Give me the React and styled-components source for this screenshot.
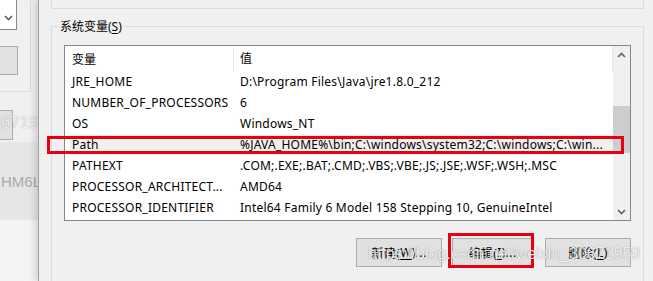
import styled, { createGlobalStyle } from 'styled-components'

const GlobalStyle = createGlobalStyle`
  html, body {
    margin: 0;
    padding: 0;
    background: #f0f0f0;
    overflow: hidden;
  }
  body {
    font-family: "Noto Sans", "Noto Sans CJK SC", sans-serif;
    font-size: 12px;
    color: #000;
  }
  u {
    text-underline-offset: 2px;
  }
`

const Page = styled.div`
  position: relative;
  width: 653px;
  height: 281px;
  display: flex;
  overflow: hidden;
`

/* window behind the dialog, only its right edge shows */
const BackWindow = styled.div`
  width: 38px;
  flex-shrink: 0;
  display: flex;
  flex-direction: column;
  background: #f0f0f0;
`
const BackGroup = styled.div`
  width: 30px;
  height: 91px;
  border-right: 1px solid #dcdcdc;
  border-bottom: 1px solid #dcdcdc;
  display: flex;
  flex-direction: column;
`
const Combo = styled.div`
  width: 17px;
  height: 30px;
  background: #fff;
  border-right: 1px solid #8a8a8a;
  border-bottom: 1px solid #8a8a8a;
  display: flex;
  align-items: flex-end;
  justify-content: center;
  padding-bottom: 8px;
  box-sizing: border-box;
`
const BackButton = styled.div`
  width: ${p => p.w}px;
  height: ${p => p.h}px;
  margin-top: ${p => p.top}px;
  background: #e1e1e1;
  border: 1px solid #adadad;
  border-left: none;
`
const GhostRow = styled.div`
  position: relative;
  margin-top: 18px;
`
const GhostMark = styled.span`
  position: absolute;
  left: 1px;
  top: 3px;
  font-family: "Liberation Sans", Arial, sans-serif;
  font-size: 17px;
  color: rgba(255, 255, 255, 0.9);
  text-shadow: 0 0 1px rgba(0, 0, 0, 0.45);
  white-space: nowrap;
`
const Band = styled.div`
  margin-top: 2px;
  height: 78px;
  background: #e6e6e6;
  display: flex;
  align-items: center;
  padding-left: 1px;
  font-family: "Liberation Sans", Arial, sans-serif;
  font-size: 15px;
  color: #a9a9a9;
  white-space: nowrap;
  overflow: hidden;
`
const BackRest = styled.div`
  flex: 1;
  background: #f4f4f4;
`

const Dialog = styled.div`
  position: relative;
  z-index: 1;
  flex: 1;
  display: flex;
  flex-direction: column;
  background: #f0f0f0;
  border-left: 1px solid #a0a0a0;
  box-shadow: -4px 0 6px rgba(0, 0, 0, 0.12);
  padding: 0 9px 0 12px;
`
const TopGroup = styled.div`
  height: 8px;
  border: 1px solid #dcdcdc;
  border-top: none;
`
const SysGroup = styled.div`
  flex: 1;
  margin-top: 17px;
  display: flex;
  flex-direction: column;
  border: 1px solid #dcdcdc;
  border-bottom: none;
  padding: 0 12px;
`
const Legend = styled.div`
  align-self: flex-start;
  margin: -9px 0 0 -6px;
  height: 18px;
  line-height: 18px;
  padding: 0 2px;
  background: #f0f0f0;
`
const List = styled.div`
  margin-top: 9px;
  height: 176px;
  box-sizing: border-box;
  border: 1px solid #828790;
  background: #fff;
  display: flex;
`
const Table = styled.div`
  flex: 1;
  display: flex;
  flex-direction: column;
`
const Header = styled.div`
  height: 25px;
  display: grid;
  grid-template-columns: 169px 1fr;
  border-right: 1px solid #e5e5e5;
  line-height: 25px;
`
const HeadCell = styled.div`
  padding-left: ${p => (p.first ? 7 : 6)}px;
  ${p => p.first && 'border-right: 1px solid #e5e5e5; margin: 1px 0 0;'}
`
const Row = styled.div`
  position: relative;
  margin-left: 5px;
  height: 21px;
  line-height: 21px;
  display: grid;
  grid-template-columns: 164px 1fr;
  background: ${p => (p.selected ? '#f0f0f0' : 'transparent')};

  ${p => p.marked && `
    &::after {
      content: '';
      position: absolute;
      left: -23px;
      right: -11px;
      top: 2px;
      bottom: 1px;
      border: 3px solid #e60012;
      pointer-events: none;
    }
  `}
`
const Cell = styled.div`
  padding-left: ${p => (p.first ? 2 : 6)}px;
  letter-spacing: 0.22px;
  white-space: nowrap;
  overflow: hidden;
`
const Scrollbar = styled.div`
  width: 17px;
  background: #f0f0f0;
  display: flex;
  flex-direction: column;
`
const ArrowBox = styled.div`
  height: 17px;
  display: flex;
  align-items: center;
  justify-content: center;
`
const Track = styled.div`
  flex: 1;
  padding-top: 43px;
`
const Thumb = styled.div`
  height: 47px;
  background: #cdcdcd;
`
const ButtonRow = styled.div`
  margin-top: 17px;
  display: flex;
  justify-content: flex-end;
`
const Button = styled.div`
  position: relative;
  width: ${p => p.w}px;
  height: 29px;
  box-sizing: border-box;
  margin-left: ${p => p.gap || 0}px;
  background: #e1e1e1;
  border: 1px solid #adadad;
  display: flex;
  align-items: center;
  justify-content: center;
  letter-spacing: 0.4px;

  ${p => p.marked && `
    &::after {
      content: '';
      position: absolute;
      left: -5px;
      right: -2px;
      top: -6px;
      bottom: -2px;
      border: 3px solid #e60012;
      pointer-events: none;
    }
  `}
`
const Watermark = styled.div`
  position: absolute;
  left: 368px;
  top: 245px;
  z-index: 3;
  font-family: "Liberation Sans", Arial, sans-serif;
  font-size: 16px;
  color: rgba(255, 255, 255, 0.9);
  text-shadow: 0 0 1px rgba(0, 0, 0, 0.5);
  white-space: nowrap;
`

const Chevron = ({ up }) => (
  <svg width="9" height="6" viewBox="0 0 9 6">
    <polyline
      points={up ? '1,5 4.5,1.5 8,5' : '1,1 4.5,4.5 8,1'}
      fill="none"
      stroke="#606060"
      strokeWidth="1.6"
    />
  </svg>
)

const vars = [
  ['JRE_HOME', 'D:\\Program Files\\Java\\jre1.8.0_212'],
  ['NUMBER_OF_PROCESSORS', '6'],
  ['OS', 'Windows_NT'],
  ['Path', '%JAVA_HOME%\\bin;C:\\windows\\system32;C:\\windows;C:\\win...', true],
  ['PATHEXT', '.COM;.EXE;.BAT;.CMD;.VBS;.VBE;.JS;.JSE;.WSF;.WSH;.MSC'],
  ['PROCESSOR_ARCHITECT...', 'AMD64'],
  ['PROCESSOR_IDENTIFIER', 'Intel64 Family 6 Model 158 Stepping 10, GenuineIntel'],
]

export default function App() {
  return (
    <Page>
      <GlobalStyle />
      <BackWindow>
        <BackGroup>
          <Combo><Chevron /></Combo>
          <BackButton w={17} h={27} top={16} />
        </BackGroup>
        <GhostRow>
          <BackButton w={12} h={28} top={0} />
          <GhostMark>67191</GhostMark>
        </GhostRow>
        <Band>HM6L</Band>
        <BackRest />
      </BackWindow>

      <Dialog>
        <TopGroup />
        <SysGroup>
          <Legend>系统变量(<u>S</u>)</Legend>
          <List>
            <Table>
              <Header>
                <HeadCell first>变量</HeadCell>
                <HeadCell>值</HeadCell>
              </Header>
              {vars.map(([name, value, hot]) => (
                <Row key={name} selected={hot} marked={hot}>
                  <Cell first>{name}</Cell>
                  <Cell>{value}</Cell>
                </Row>
              ))}
            </Table>
            <Scrollbar>
              <ArrowBox><Chevron up /></ArrowBox>
              <Track><Thumb /></Track>
              <ArrowBox><Chevron /></ArrowBox>
            </Scrollbar>
          </List>
          <ButtonRow>
            <Button w={86}>新建(<u>W</u>)...</Button>
            <Button w={81} gap={10} marked>编辑(<u>I</u>)...</Button>
            <Button w={86} gap={12}>删除(<u>L</u>)</Button>
          </ButtonRow>
        </SysGroup>
      </Dialog>

      <Watermark>https://blog.csdn.net/weixin_30671959</Watermark>
    </Page>
  )
}
